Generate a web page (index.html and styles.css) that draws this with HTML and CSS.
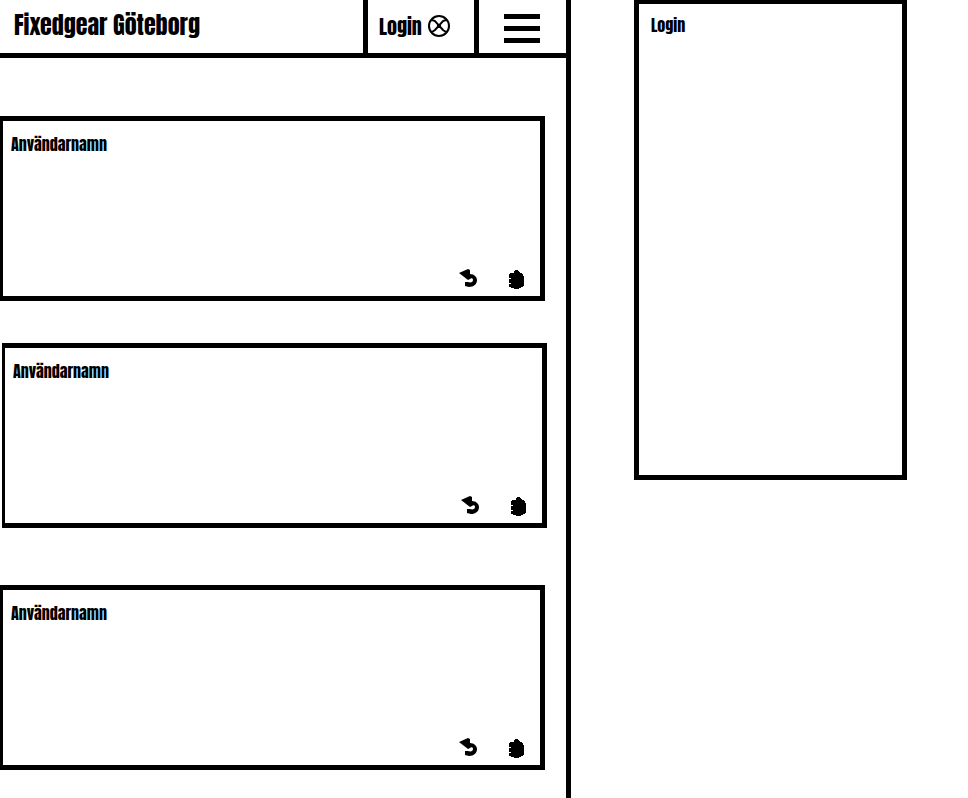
FILE: index.html
```html
<!DOCTYPE html>
<html lang="sv">
<head>
<meta charset="utf-8">
<meta name="viewport" content="width=device-width, initial-scale=1">
<title>Fixedgear Göteborg</title>
<link rel="stylesheet" href="styles.css">
</head>
<body>
<svg class="sprite" aria-hidden="true">
  <symbol id="reply" viewBox="0 0 18 18">
    <path d="M0 4L9 0l2 1v4c4 0 7 3 7 6 0 4-3 7-8 7l-4-1v-4h3c3 1 5 0 5-2s-2-2-3-1l-2 1z"/>
  </symbol>
  <symbol id="hand" viewBox="0 0 15 19">
    <path d="M5 1h1V0h3v1h1v1h1v1h2v1h1v2h1v10h-1v1h-2v1h-2v1H5v-1H2v-1H0v-3h2v-1H0V9h2V8H0V4h1V3h4z"/>
  </symbol>
</svg>
<div class="layout">
  <main class="feed">
    <header class="topbar">
      <h1 class="brand">Fixedgear Göteborg</h1>
      <a class="login" href="#login">Login
        <svg class="wheel" viewBox="0 0 22 22" aria-hidden="true">
          <circle cx="11" cy="11" r="10"/>
          <path d="M4 5l3 1 8 9 3 2M18 5l-3 1-8 9-3 2"/>
          <path class="hub" d="M9 9h4v4H9z"/>
        </svg>
      </a>
      <button class="menu" type="button" aria-label="Meny"><span></span><span></span><span></span></button>
    </header>
    <article class="post">
      <h2 class="name">Användarnamn</h2>
      <div class="actions">
        <button type="button" aria-label="Svara"><svg class="reply"><use href="#reply"/></svg></button>
        <button type="button" aria-label="Gilla"><svg class="hand"><use href="#hand"/></svg></button>
      </div>
    </article>
    <article class="post post-shifted">
      <h2 class="name">Användarnamn</h2>
      <div class="actions">
        <button type="button" aria-label="Svara"><svg class="reply"><use href="#reply"/></svg></button>
        <button type="button" aria-label="Gilla"><svg class="hand"><use href="#hand"/></svg></button>
      </div>
    </article>
    <article class="post">
      <h2 class="name">Användarnamn</h2>
      <div class="actions">
        <button type="button" aria-label="Svara"><svg class="reply"><use href="#reply"/></svg></button>
        <button type="button" aria-label="Gilla"><svg class="hand"><use href="#hand"/></svg></button>
      </div>
    </article>
  </main>
  <aside class="panel" id="login">
    <h2 class="name">Login</h2>
  </aside>
</div>
</body>
</html>
```
FILE: styles.css
```css
* {
  box-sizing: border-box;
}

body {
  margin: 0;
  background: #fff;
  color: #000;
  font-family: Impact, Anton, "Liberation Sans Narrow", "Liberation Sans", sans-serif;
}

h1,
h2 {
  margin: 0;
  font-weight: normal;
}

button {
  display: flex;
  padding: 0;
  border: 0;
  background: none;
  color: inherit;
  cursor: pointer;
}

.sprite {
  position: absolute;
  width: 0;
  height: 0;
}

.layout {
  display: grid;
  grid-template-columns: 571fr 273fr;
  column-gap: 63px;
  align-items: start;
  min-height: 100vh;
  padding-right: 61px;
}

.feed {
  align-self: stretch;
  border-right: 5px solid #000;
  padding-bottom: 28px;
}

.topbar {
  display: flex;
  height: 58px;
  margin-bottom: 58px;
  border-bottom: 5px solid #000;
}

.brand {
  flex: 1;
  padding-left: 14px;
  font-size: 24px;
  line-height: 50px;
  white-space: nowrap;
}

.login {
  display: flex;
  align-items: center;
  gap: 6px;
  width: 111px;
  padding: 0 0 1px 11px;
  border-left: 5px solid #000;
  color: inherit;
  font-size: 20px;
  text-decoration: none;
}

.wheel {
  width: 22px;
  height: 22px;
  fill: none;
  stroke: #000;
  stroke-width: 2;
}

.wheel .hub {
  fill: #000;
  stroke: none;
}

.menu {
  flex-direction: column;
  align-items: center;
  gap: 7px;
  width: 92px;
  padding: 14px 2px 0 0;
  border-left: 5px solid #000;
}

.menu span {
  width: 36px;
  height: 5px;
  background: #000;
}

.post {
  display: flex;
  flex-direction: column;
  justify-content: space-between;
  min-height: 185px;
  margin-right: 21px;
  padding: 13px 16px 7px 8px;
  border: 5px solid #000;
  border-left-width: 3px;
}

.post-shifted {
  margin: 42px 19px 57px 2px;
}

.name {
  font-size: 16px;
  line-height: 20px;
}

.actions {
  display: flex;
  justify-content: flex-end;
  align-items: flex-end;
  gap: 32px;
  height: 20px;
}

.reply {
  width: 18px;
  height: 18px;
  margin-bottom: 2px;
}

.hand {
  width: 15px;
  height: 19px;
}

.panel {
  min-height: 480px;
  padding: 11px 12px;
  border: 5px solid #000;
  border-top-width: 4px;
}
```
